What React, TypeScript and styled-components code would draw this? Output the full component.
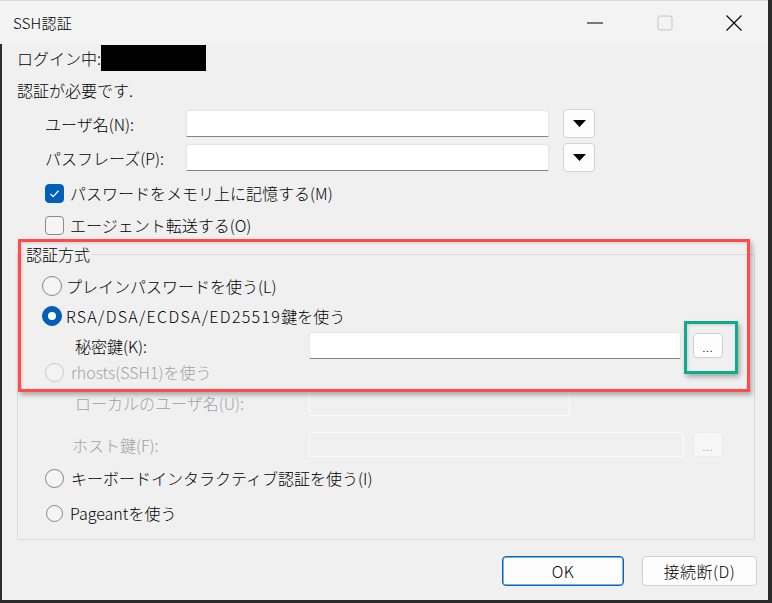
import React from "react";
import styled, { createGlobalStyle } from "styled-components";

const Global = createGlobalStyle`
  html, body { margin: 0; padding: 0; background: #2b2b2b; }
  body { font-family: "Noto Sans CJK JP", "Noto Sans", sans-serif; font-weight: 300; color: #000; }
  * { box-sizing: border-box; }
`;

const Screen = styled.div`
  position: relative;
  width: 772px;
  height: 603px;
  background: #2b2b2b;
  display: flex;
  padding: 0 4px 3px 2px;
  overflow: hidden;
`;

const Window = styled.div`
  flex: 1;
  display: flex;
  flex-direction: column;
  background: #f0f0f0;
`;

const TitleBar = styled.div`
  height: 44px;
  margin-left: -2px;
  background: #f3f3f3;
  border-top: 1px solid #dadada;
  display: flex;
  align-items: center;
  padding-left: 13px;
`;

const TitleText = styled.div`
  font-size: 15px;
  letter-spacing: 0.2px;
`;

const Controls = styled.div`
  margin-left: auto;
  display: flex;
  height: 100%;
`;

const ControlButton = styled.div<{ $w: number }>`
  width: ${(p) => p.$w}px;
  height: 100%;
  display: flex;
  align-items: center;
  justify-content: center;
`;

const Body = styled.div`
  flex: 1;
  display: flex;
  flex-direction: column;
  padding: 1px 13px 0 15px;
`;

const TextRow = styled.div<{ $mt: number }>`
  height: 26px;
  margin-top: ${(p) => p.$mt}px;
  display: flex;
  align-items: center;
  font-size: 16px;
  white-space: nowrap;
`;

const Redacted = styled.div`
  width: 105px;
  height: 26px;
  background: #000;
`;

const FieldRow = styled.div<{ $mt: number; $indent: number; $h?: number }>`
  height: ${(p) => p.$h ?? 29}px;
  margin-top: ${(p) => p.$mt}px;
  padding-left: ${(p) => p.$indent}px;
  display: flex;
  align-items: center;
  white-space: nowrap;
`;

const Label = styled.div<{ $w: number; $disabled?: boolean }>`
  width: ${(p) => p.$w}px;
  font-size: 16px;
  color: ${(p) => (p.$disabled ? "#a2a2a2" : "#000")};
`;

const TextInput = styled.div<{ $w: number; $h?: number; $disabled?: boolean }>`
  width: ${(p) => p.$w}px;
  height: ${(p) => p.$h ?? 27}px;
  border-radius: 3px 3px 0 0;
  background: ${(p) => (p.$disabled ? "#f0f0f0" : "#ffffff")};
  border: 1px solid ${(p) => (p.$disabled ? "#fbfbfb" : "#e6e6e6")};
  border-bottom: 1px solid ${(p) => (p.$disabled ? "#fbfbfb" : "#868686")};
`;

const DropButton = styled.div`
  width: 32px;
  height: 29px;
  margin-left: 14px;
  border: 1px solid #d3d3d3;
  border-radius: 4px;
  background: #fdfdfd;
  display: flex;
  align-items: center;
  justify-content: center;
`;

const BrowseButton = styled.div<{ $disabled?: boolean }>`
  width: 30px;
  height: 25px;
  margin-left: ${(p) => (p.$disabled ? 9 : 12)}px;
  border: 1px solid ${(p) => (p.$disabled ? "#ececec" : "#cfcfcf")};
  border-radius: 4px;
  background: ${(p) => (p.$disabled ? "#f6f6f6" : "#fdfdfd")};
  color: ${(p) => (p.$disabled ? "#a0a0a0" : "#000")};
  font-size: 11px;
  letter-spacing: 1px;
  display: flex;
  align-items: center;
  justify-content: center;
  padding-top: 2px;
`;

const CheckBox = styled.div<{ $checked?: boolean }>`
  width: 19px;
  height: 19px;
  border-radius: 4px;
  margin-right: 6px;
  background: ${(p) => (p.$checked ? "#005fb8" : "#f5f5f5")};
  border: 1px solid ${(p) => (p.$checked ? "#005fb8" : "#8a8a8a")};
  display: flex;
  align-items: center;
  justify-content: center;
`;

const OptionText = styled.div<{ $disabled?: boolean }>`
  font-size: 16px;
  color: ${(p) => (p.$disabled ? "#a2a2a2" : "#000")};
`;

const Latin = styled.span`
  letter-spacing: 1.3px;
`;

const Radio = styled.div<{ $checked?: boolean; $disabled?: boolean; $size?: number }>`
  width: ${(p) => p.$size ?? 20}px;
  height: ${(p) => p.$size ?? 20}px;
  border-radius: 50%;
  margin-right: ${(p) => (p.$size ? 7 : 4)}px;
  background: ${(p) => (p.$checked ? "#005fb8" : p.$disabled ? "#f3f3f3" : "#f5f5f5")};
  border: 1px solid
    ${(p) => (p.$checked ? "#005fb8" : p.$disabled ? "#c9c9c9" : "#858585")};
  display: flex;
  align-items: center;
  justify-content: center;
  flex-shrink: 0;
  &::after {
    content: "";
    display: ${(p) => (p.$checked ? "block" : "none")};
    width: 8px;
    height: 8px;
    border-radius: 50%;
    background: #fff;
  }
`;

const GroupBox = styled.div`
  position: relative;
  margin-top: 16px;
  border: 1px solid #dcdcdc;
  padding: 0 0 13px 24px;
  display: flex;
  flex-direction: column;
`;

const Legend = styled.div`
  position: absolute;
  top: -11px;
  left: 7px;
  padding: 0 2px 0 1px;
  background: #f0f0f0;
  font-size: 16px;
  line-height: 20px;
`;

const ButtonRow = styled.div`
  margin-top: 16px;
  margin-right: -2px;
  display: flex;
  justify-content: flex-end;
  gap: 18px;
`;

const PushButton = styled.div<{ $w: number; $default?: boolean }>`
  width: ${(p) => p.$w}px;
  height: 30px;
  border-radius: 4px;
  background: #fdfdfd;
  border: 1px solid ${(p) => (p.$default ? "#0067c0" : "#d0d0d0")};
  box-shadow: ${(p) => (p.$default ? "inset 0 0 0 0.5px #0067c0" : "none")};
  font-size: 16px;
  display: flex;
  align-items: center;
  justify-content: center;
  letter-spacing: 0.5px;
`;

const Highlight = styled.div<{ $x: number; $y: number; $w: number; $h: number; $c: string }>`
  position: absolute;
  left: ${(p) => p.$x}px;
  top: ${(p) => p.$y}px;
  width: ${(p) => p.$w}px;
  height: ${(p) => p.$h}px;
  border: 3px solid ${(p) => p.$c};
  box-shadow: 2px 3px 5px rgba(0, 0, 0, 0.3), inset 1px 1px 3px rgba(0, 0, 0, 0.15);
  pointer-events: none;
`;

const Triangle = () => (
  <svg width="13" height="7" viewBox="0 0 13 7">
    <polygon points="0,0 13,0 6.5,7" fill="#000" />
  </svg>
);

const Check = () => (
  <svg width="13" height="13" viewBox="0 0 13 13">
    <polyline points="2.5,7 5.2,9.6 10.5,3.8" fill="none" stroke="#fff" strokeWidth="1.3" />
  </svg>
);

export default function App() {
  return (
    <>
      <Global />
      <Screen>
        <Window>
          <TitleBar>
            <TitleText>SSH認証</TitleText>
            <Controls>
              <ControlButton $w={70}>
                <svg width="16" height="2" viewBox="0 0 16 2">
                  <line x1="0" y1="1" x2="16" y2="1" stroke="#000" strokeWidth="1" />
                </svg>
              </ControlButton>
              <ControlButton $w={70}>
                <svg width="16" height="16" viewBox="0 0 16 16">
                  <rect x="1" y="1" width="14" height="14" rx="2" fill="none" stroke="#c4c4c4" strokeWidth="1" />
                </svg>
              </ControlButton>
              <ControlButton $w={68}>
                <svg width="16" height="16" viewBox="0 0 16 16">
                  <path d="M0.5 0.5 L15.5 15.5 M15.5 0.5 L0.5 15.5" stroke="#000" strokeWidth="1.1" />
                </svg>
              </ControlButton>
            </Controls>
          </TitleBar>
          <Body>
            <TextRow $mt={0}>
              ログイン中:
              <Redacted />
            </TextRow>
            <TextRow $mt={6}>認証が必要です.</TextRow>

            <FieldRow $mt={6} $indent={28}>
              <Label $w={141}>ユーザ名(N):</Label>
              <TextInput $w={363} />
              <DropButton>
                <Triangle />
              </DropButton>
            </FieldRow>
            <FieldRow $mt={5} $indent={28}>
              <Label $w={141}>パスフレーズ(P):</Label>
              <TextInput $w={363} />
              <DropButton>
                <Triangle />
              </DropButton>
            </FieldRow>

            <FieldRow $mt={8} $indent={28} $h={26}>
              <CheckBox $checked>
                <Check />
              </CheckBox>
              <OptionText>パスワードをメモリ上に記憶する(M)</OptionText>
            </FieldRow>
            <FieldRow $mt={6} $indent={28} $h={26}>
              <CheckBox />
              <OptionText>エージェント転送する(O)</OptionText>
            </FieldRow>

            <GroupBox>
              <Legend>認証方式</Legend>
              <FieldRow $mt={18} $indent={0} $h={26}>
                <Radio />
                <OptionText>プレインパスワードを使う(L)</OptionText>
              </FieldRow>
              <FieldRow $mt={4} $indent={0} $h={26}>
                <Radio $checked />
                <OptionText>
                  <Latin>RSA/DSA/ECDSA/ED25519</Latin>鍵を使う
                </OptionText>
              </FieldRow>
              <FieldRow $mt={3} $indent={33} $h={27}>
                <Label $w={234}>秘密鍵(K):</Label>
                <TextInput $w={372} />
                <BrowseButton>...</BrowseButton>
              </FieldRow>
              <FieldRow $mt={0} $indent={3} $h={26}>
                <Radio $disabled $size={19} />
                <OptionText $disabled>rhosts(SSH1)を使う</OptionText>
              </FieldRow>
              <FieldRow $mt={4} $indent={33} $h={27}>
                <Label $w={234} $disabled>ローカルのユーザ名(U):</Label>
                <TextInput $w={261} $disabled />
              </FieldRow>
              <FieldRow $mt={16} $indent={30} $h={25}>
                <Label $w={237} $disabled>ホスト鍵(F):</Label>
                <TextInput $w={375} $h={25} $disabled />
                <BrowseButton $disabled>...</BrowseButton>
              </FieldRow>
              <FieldRow $mt={8} $indent={3} $h={26}>
                <Radio $size={19} />
                <OptionText>キーボードインタラクティブ認証を使う(I)</OptionText>
              </FieldRow>
              <FieldRow $mt={9} $indent={4} $h={26}>
                <Radio $size={17} />
                <OptionText>Pageantを使う</OptionText>
              </FieldRow>
            </GroupBox>

            <ButtonRow>
              <PushButton $w={122} $default>
                OK
              </PushButton>
              <PushButton $w={115}>接続断(D)</PushButton>
            </ButtonRow>
          </Body>
        </Window>
        <Highlight $x={18} $y={239} $w={732} $h={153} $c="#ff4b4b" />
        <Highlight $x={684} $y={321} $w={54} $h={53} $c="#0fab8c" />
      </Screen>
    </>
  );
}
